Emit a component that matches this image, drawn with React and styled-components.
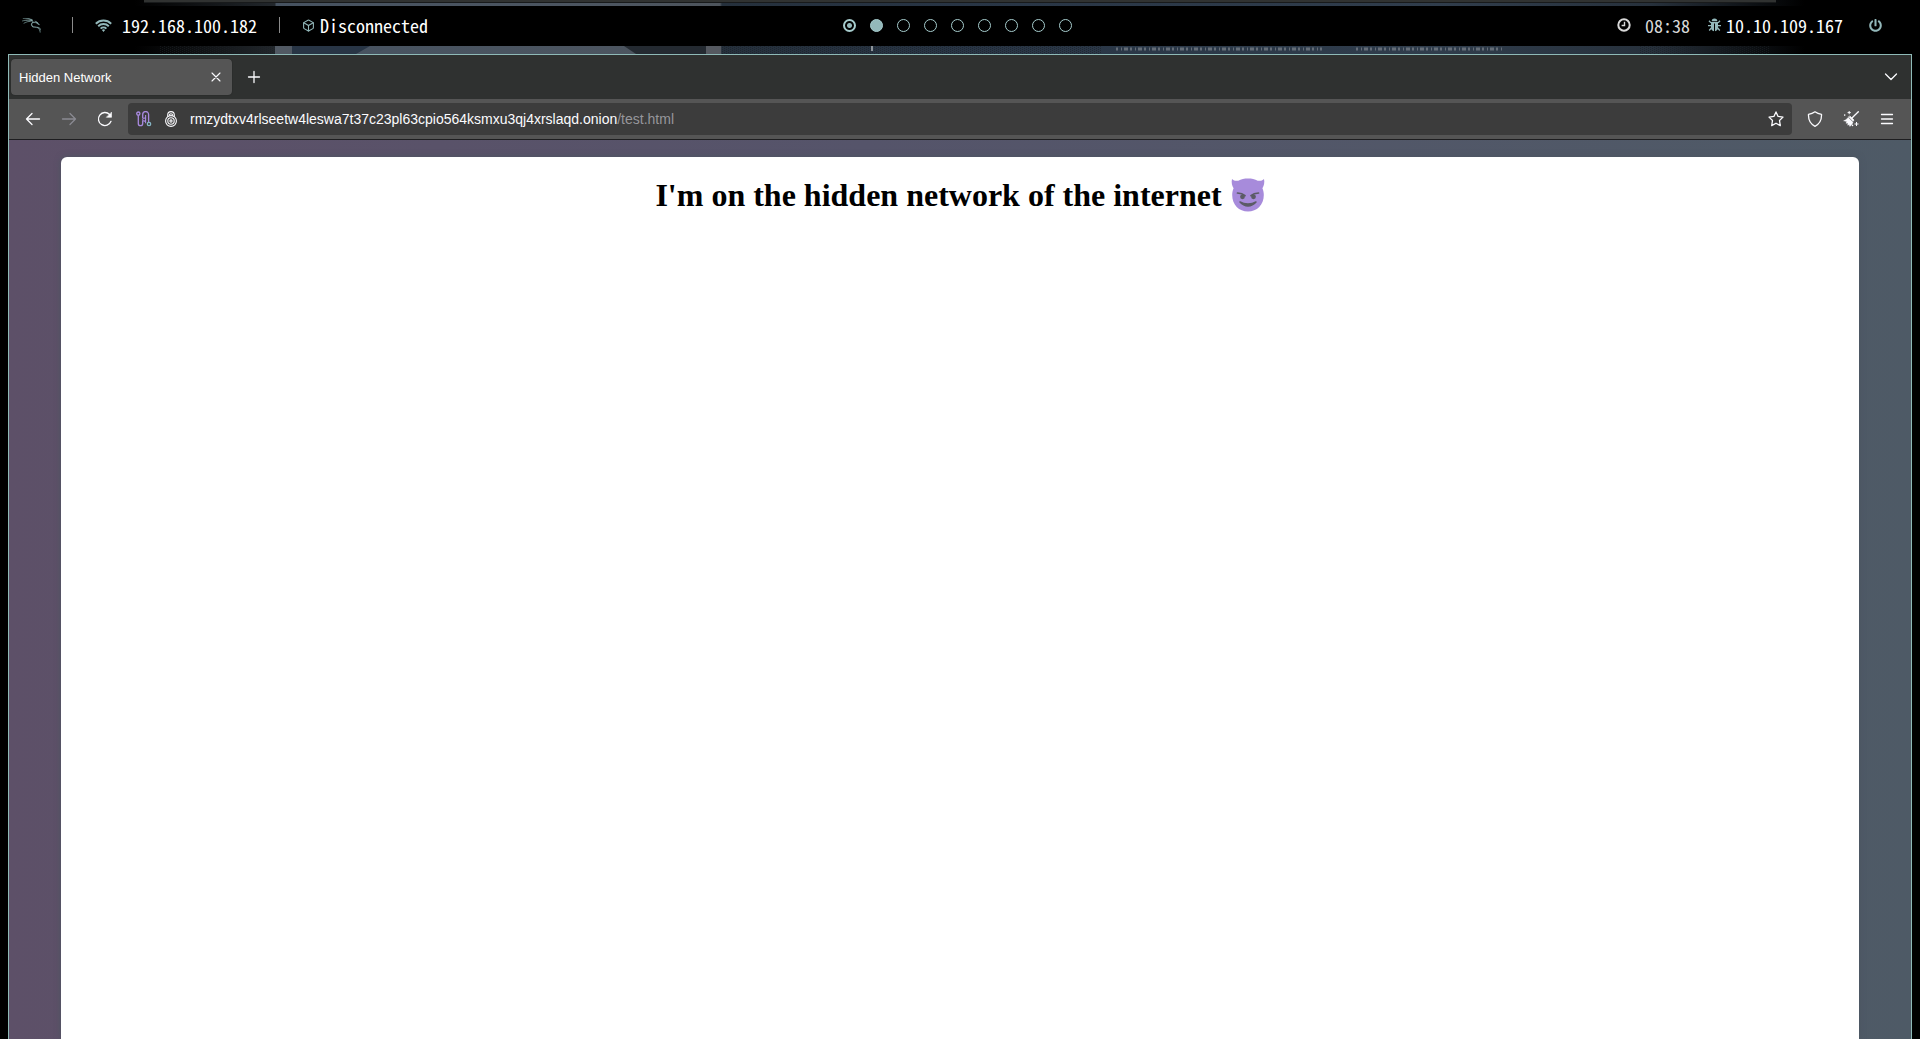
import { createGlobalStyle, styled } from "styled-components";
import { SiKalilinux } from "react-icons/si";
import { FaPowerOff } from "react-icons/fa";
import { LuBox } from "react-icons/lu";

const GlobalStyle = createGlobalStyle`
  * {
    box-sizing: border-box;
  }
  html, body, #root {
    height: 100%;
  }
  body {
    margin: 0;
    background: #000;
    overflow: hidden;
  }
  button {
    border: none;
    background: none;
    padding: 0;
    cursor: pointer;
  }
`;

const Desktop = styled.div`
  height: 100%;
  display: flex;
  flex-direction: column;
`;

const WallpaperStrip = styled.svg`
  display: block;
  flex: none;
  width: 100%;
  height: ${(props) => props.$height}px;
`;

const StatusBar = styled.header`
  flex: none;
  height: 40px;
  padding: 0 28px 2px 22px;
  background: #000;
  color: #fff;
  font-family: "Noto Sans Mono CJK SC", "DejaVu Sans Mono", monospace;
  font-size: 18px;
  line-height: 24px;
  display: grid;
  grid-template-columns: 1fr auto 1fr;
  align-items: center;
`;

const StatusGroup = styled.div`
  display: flex;
  align-items: center;
  gap: ${(props) => props.$gap || 0}px;
  justify-content: ${(props) => (props.$end ? "flex-end" : "flex-start")};
`;

const StatusItem = styled.div`
  display: flex;
  align-items: center;
  gap: ${(props) => props.$gap}px;
  color: ${(props) => props.$color || "#fff"};
  svg {
    color: ${(props) => props.$iconColor || "#93b8ba"};
  }
`;

const LauncherButton = styled.button`
  width: 28px;
  display: flex;
  color: #93b8ba;
  svg {
    stroke: currentColor;
    stroke-width: 0.4;
  }
`;

const Divider = styled.span`
  width: 1px;
  height: 16px;
  margin: 0 22px;
  background: #8b8b8b;
`;

const Workspaces = styled.nav`
  display: flex;
  gap: 14px;
`;

const Workspace = styled.button`
  width: 13px;
  height: 13px;
  border-radius: 50%;
  border: ${(props) => (props.$state === "urgent" ? 2 : 1)}px solid #a6cccd;
  background: ${(props) =>
    props.$state === "active"
      ? "#93b8ba"
      : props.$state === "urgent"
        ? "radial-gradient(circle, #93b8ba 2px, transparent 3px)"
        : "transparent"};
`;

const PowerButton = styled.button`
  display: flex;
  margin: 0 10px 0 8px;
  color: #93b8ba;
`;

const BrowserWindow = styled.main`
  flex: 1;
  min-height: 0;
  margin: 0 8px;
  border: 1px solid #8fbab7;
  border-bottom: none;
  display: flex;
  flex-direction: column;
  font-family: "Liberation Sans", Arial, sans-serif;
`;

const TabStrip = styled.div`
  flex: none;
  height: 44px;
  padding: 0 10px 0 2px;
  background: #2f3130;
  color: #fff;
  display: flex;
  align-items: center;
`;

const Tab = styled.div`
  width: 221px;
  height: 36px;
  padding: 0 6px 0 8px;
  border-radius: 4px;
  background: #555;
  box-shadow: 0 0 1px #111;
  display: flex;
  align-items: center;
  justify-content: space-between;
  font-size: 13px;
`;

const IconButton = styled.button`
  width: ${(props) => props.$size || 36}px;
  height: ${(props) => props.$size || 36}px;
  display: flex;
  align-items: center;
  justify-content: center;
  color: ${(props) => (props.disabled ? "#8a8a92" : "#fbfbfe")};
`;

const NewTabButton = styled(IconButton)`
  margin: 0 auto 0 4px;
`;

const Toolbar = styled.div`
  flex: none;
  height: 41px;
  padding: 0 6px;
  background: #555;
  border-bottom: 1px solid #1e1e20;
  display: flex;
  align-items: center;
`;

const UrlBar = styled.div`
  flex: 1;
  height: 32px;
  margin: 0 5px;
  padding: 0 2px 0 8px;
  border-radius: 4px;
  background: #3c3c3c;
  color: #fbfbfe;
  display: flex;
  align-items: center;
  gap: 11px;
`;

const Address = styled.label`
  flex: 1;
  display: flex;
  align-items: center;
  font-size: 14px;
  line-height: 20px;
  white-space: nowrap;
`;

const AddressInput = styled.input`
  field-sizing: content;
  padding: 0;
  border: none;
  outline: none;
  background: none;
  color: inherit;
  font: inherit;
`;

const AddressPath = styled.span`
  color: #96969b;
`;

const Page = styled.div`
  flex: 1;
  min-height: 0;
  padding: 17px 52px 0;
  background: linear-gradient(90deg, #5d5068, #55546a 45%, #4e5a66);
`;

const Card = styled.article`
  height: 100%;
  padding: 16px;
  border-radius: 6px 6px 0 0;
  background: #fff;
  box-shadow: 0 0 6px #4c5560;
`;

const Title = styled.h1`
  margin: 0;
  display: flex;
  justify-content: center;
  align-items: center;
  gap: 9px;
  color: #000;
  font-family: "Liberation Serif", "Times New Roman", serif;
  font-size: 32px;
  line-height: 44px;
`;

function LineIcon({ size = 16, children, ...rest }) {
  return (
    <svg
      width={size}
      height={size}
      viewBox="0 0 16 16"
      fill="none"
      stroke="currentColor"
      strokeWidth="1.3"
      strokeLinecap="round"
      strokeLinejoin="round"
      {...rest}
    >
      {children}
    </svg>
  );
}

function WifiIcon() {
  return (
    <svg width="17" height="13" viewBox="0 0 17 13" fill="none" stroke="currentColor" strokeWidth="1.9">
      <path d="M.8 4.7a11 11 0 0 1 15.4 0M3.2 7.2a7.6 7.6 0 0 1 10.6 0M5.6 9.6a4.2 4.2 0 0 1 5.8 0" />
      <path d="m6.900 11 1.600 1.900 1.600-1.900a2.300 2.300 0 0 0-3.200 0z" fill="currentColor" stroke="none" />
    </svg>
  );
}

function ClockIcon() {
  return (
    <svg width="14" height="14" viewBox="0 0 14 14" fill="none" stroke="currentColor">
      <circle cx="7" cy="7" r="5.7" strokeWidth="2" />
      <path d="M7.5 3.8v3.7H4.6" strokeWidth="1.4" />
    </svg>
  );
}

function BugIcon() {
  return (
    <svg width="13" height="14" viewBox="0 0 13 14" fill="currentColor">
      <path d="M3.7 3.2a2.8 2.8 0 0 1 5.6 0z" />
      <path d="M3 4h7v5.5c0 2-1.200 3.500-3 3.700V5.500H6v7.700c-1.800-.2-3-1.700-3-3.700z" />
      <path
        d="M3 4.900 1 2.800M10 4.900l2-2.100M3 7.700H0M10 7.700h3M3.300 10 1.200 12.500M9.700 10l2.100 2.500"
        stroke="currentColor"
        strokeWidth="1.3"
      />
    </svg>
  );
}

function CircuitIcon() {
  return (
    <svg width="16" height="16" viewBox="0 0 16 16" fill="none" stroke="#a98ae0" strokeWidth="1.3">
      <circle cx="2.300" cy="2.600" r="1.600" />
      <path d="M2.300 4.200v8.300a2.200 2.200 0 0 0 4.400 0V9.500" />
      <path d="M6.700 7V3.500a2.900 2.900 0 0 1 5.900 0v7.700" />
      <path d="M9.600 4v4.200a1.500 1.500 0 1 1-2.900 0A1.500 1.500 0 0 1 9.600 8v4.200" strokeWidth="1.1" />
      <circle cx="13" cy="13" r="1.700" stroke="#86b5c5" />
    </svg>
  );
}

function OnionIcon() {
  return (
    <LineIcon strokeWidth="1.1">
      <path d="M4.700 5.300V3.900a3.300 3.300 0 0 1 6.600 0v1.400" />
      <path d="M6.400 4.300a1.600 1.600 0 0 1 3.200 0" />
      <circle cx="8" cy="10" r="5.400" />
      <circle cx="8" cy="10" r="3.200" />
      <circle cx="8" cy="10" r="1.100" />
    </LineIcon>
  );
}

function BroomIcon() {
  return (
    <LineIcon>
      <path d="M15.3.7 9.200 6.800" />
      <path d="M7.200 5.200 11 9l-.8 1.200-4.300-4.300z" fill="currentColor" strokeWidth="0.6" />
      <path
        d="M5.200 6.500 10 11.200c-.6 1.600-1.600 3-3.200 4.200l-.6-2-1.500.8.3-2.200-2 .3.8-1.700L.6 9.800C2.600 9.300 3.800 8 5.200 6.500z"
        fill="currentColor"
        strokeWidth="0.4"
      />
      <path d="M6.200.4v2.400M5 1.600h2.400M13.500 11.400v3.200M11.900 13h3.200" strokeWidth="1" />
      <path d="M1.700 4v.1M9.500 14.300v.1" strokeWidth="1.6" />
    </LineIcon>
  );
}

function DevilIcon() {
  return (
    <svg width="34" height="34" viewBox="0 0 34 34" role="img" aria-label="😈">
      <path
        d="M1 1c1.500 1.800 4 2 6.300 1.700C10 1 13.500.5 17 .5s7 .5 9.700 2.200C29 3 31.500 2.800 33 1c.8 3.500 0 6.600-1.600 9.200.9 2 1.400 4.300 1.400 6.800C32.800 27 26 33.500 17 33.500S1.200 27 1.200 17c0-2.500.5-4.800 1.400-6.800C1 7.600.2 4.500 1 1z"
        fill="#a78bdb"
      />
      <g fill="none" stroke="#5b5b66" strokeLinecap="round">
        <path d="M6.500 15c3 .1 5.500.9 7.500 2.700M27.500 15c-3 .1-5.500.9-7.500 2.700" strokeWidth="1.7" />
        <path
          d="M9 24c4.500 5.200 11.500 5.200 16 0-4.500 2.600-11.500 2.600-16 0z"
          fill="#5b5b66"
          strokeWidth="1.5"
          strokeLinejoin="round"
        />
      </g>
      <circle cx="11.5" cy="18.8" r="2.4" fill="#5b5b66" />
      <circle cx="22.5" cy="18.8" r="2.4" fill="#5b5b66" />
    </svg>
  );
}

const WORKSPACES = [
  "urgent",
  "active",
  "empty",
  "empty",
  "empty",
  "empty",
  "empty",
  "empty",
  "empty",
];

// the slices of desktop wallpaper left visible around the status bar
function Wallpaper({ height, top }) {
  const id = top ? "wall-top" : "wall-bottom";
  return (
    <WallpaperStrip
      $height={height}
      viewBox={`0 0 1920 ${height}`}
      preserveAspectRatio="none"
      aria-hidden="true"
    >
      <defs>
        <linearGradient id={id}>
          <stop offset="0.07" stopColor="#000" />
          <stop offset="0.143" stopColor="#22272c" />
          <stop offset="0.144" stopColor="#465260" />
          <stop offset="0.32" stopColor="#4c5560" />
          <stop offset="0.375" stopColor="#4d545c" />
          <stop offset="0.376" stopColor="#25303c" />
          <stop offset="0.5" stopColor="#283545" />
          <stop offset="0.75" stopColor="#303d4c" />
          <stop offset="0.86" stopColor="#27313c" />
          <stop offset="0.94" stopColor="#000" />
        </linearGradient>
        <pattern id={`${id}-grain`} width="4" height="2" patternUnits="userSpaceOnUse">
          <path d="M0 0h1v1H0zM2 1h1v1H2z" fill="#1b2025" />
        </pattern>
      </defs>
      <rect width="1920" height={height} fill={`url(#${id})`} />
      {top ? (
        <>
          <path d="M144 0h1632v3H144z" fill="#303231" />
          <path d="M144 2h1632v1H144z" fill="#181a1b" />
        </>
      ) : (
        <>
          <path d="M275 0h17v8h-17z" fill="#515963" />
          <path d="M292 0h78l-14 8h-64z" fill="#283545" />
          <path d="M624 0h82v8h-70z" fill="#242a31" />
          <path d="M706 0h15v8h-15z" fill="#555960" />
          <path
            d="M160 0h115v8H160zM722 0h380v8H722zM1640 0h130v8h-130z"
            fill={`url(#${id}-grain)`}
            opacity="0.6"
          />
          <path
            d="M1116 3h206M1356 3h146"
            stroke="#7c838b"
            strokeWidth="3"
            strokeDasharray="2 3 1 2 4 2"
            opacity="0.7"
          />
          <path d="M871 0h2v5h-2z" fill="#8d949a" />
        </>
      )}
    </WallpaperStrip>
  );
}

export default function App() {
  return (
    <Desktop>
      <GlobalStyle />
      <Wallpaper height={6} top />
      <StatusBar>
        <StatusGroup>
          <LauncherButton aria-label="Applications">
            <SiKalilinux size={19} />
          </LauncherButton>
          <Divider />
          <StatusItem $gap={10}>
            <WifiIcon />
            192.168.100.182
          </StatusItem>
          <Divider />
          <StatusItem $gap={5}>
            <LuBox size={13} />
            Disconnected
          </StatusItem>
        </StatusGroup>
        <Workspaces aria-label="Workspaces">
          {WORKSPACES.map((state, i) => (
            <Workspace key={i} $state={state} aria-label={`Workspace ${i + 1}`} />
          ))}
        </Workspaces>
        <StatusGroup $end $gap={18}>
          <StatusItem $gap={14} $color="#d8d8d8" $iconColor="#d8d8d8">
            <ClockIcon />
            08:38
          </StatusItem>
          <StatusItem $gap={5}>
            <BugIcon />
            10.10.109.167
          </StatusItem>
          <PowerButton aria-label="Power">
            <FaPowerOff size={13} />
          </PowerButton>
        </StatusGroup>
      </StatusBar>
      <Wallpaper height={8} />
      <BrowserWindow>
        <TabStrip>
          <Tab>
            Hidden Network
            <IconButton $size={20} aria-label="Close tab">
              <LineIcon strokeWidth="1.1">
                <path d="m4 4 8 8M12 4l-8 8" />
              </LineIcon>
            </IconButton>
          </Tab>
          <NewTabButton aria-label="New tab">
            <LineIcon>
              <path d="M8 2.5v11M2.5 8h11" />
            </LineIcon>
          </NewTabButton>
          <IconButton $size={20} aria-label="List all tabs">
            <LineIcon>
              <path d="m2.5 5 5.500 5.500L13.500 5" />
            </LineIcon>
          </IconButton>
        </TabStrip>
        <Toolbar>
          <IconButton aria-label="Back">
            <LineIcon>
              <path d="M14.5 8h-13M7 2.5 1.500 8 7 13.500" />
            </LineIcon>
          </IconButton>
          <IconButton aria-label="Forward" disabled>
            <LineIcon>
              <path d="M1.5 8h13M9 2.5 14.500 8 9 13.500" />
            </LineIcon>
          </IconButton>
          <IconButton aria-label="Reload">
            <LineIcon>
              <path d="M14 10.300A6.500 6.500 0 1 1 12.600 3.500" />
              <path d="M14.500 1.500v4.800H9.700z" fill="currentColor" strokeWidth="0.6" />
            </LineIcon>
          </IconButton>
          <UrlBar>
            <CircuitIcon />
            <OnionIcon />
            <Address>
              <AddressInput
                type="text"
                aria-label="Address"
                spellCheck={false}
                defaultValue="rmzydtxv4rlseetw4leswa7t37c23pl63cpio564ksmxu3qj4xrslaqd.onion"
              />
              <AddressPath>/test.html</AddressPath>
            </Address>
            <IconButton $size={28} aria-label="Bookmark this page">
              <LineIcon>
                <path d="m8 .9 2.100 4.500 4.900.7-3.500 3.400.8 5.100L8 12.200l-4.300 2.400.8-5.100L1 6.100l4.900-.7z" />
              </LineIcon>
            </IconButton>
          </UrlBar>
          <IconButton aria-label="Security level">
            <LineIcon>
              <path d="M8 .8c2 1.400 4 2.100 6.500 2.500.3 5.600-1.700 9.600-6.500 12-4.800-2.400-6.800-6.400-6.500-12C4 2.900 6 2.200 8 .8z" />
            </LineIcon>
          </IconButton>
          <IconButton aria-label="New identity">
            <BroomIcon />
          </IconButton>
          <IconButton aria-label="Open menu">
            <LineIcon>
              <path d="M2.5 3.500h11M2.500 8h11M2.500 12.500h11" />
            </LineIcon>
          </IconButton>
        </Toolbar>
        <Page>
          <Card>
            <Title>
              I'm on the hidden network of the internet <DevilIcon />
            </Title>
          </Card>
        </Page>
      </BrowserWindow>
    </Desktop>
  );
}
